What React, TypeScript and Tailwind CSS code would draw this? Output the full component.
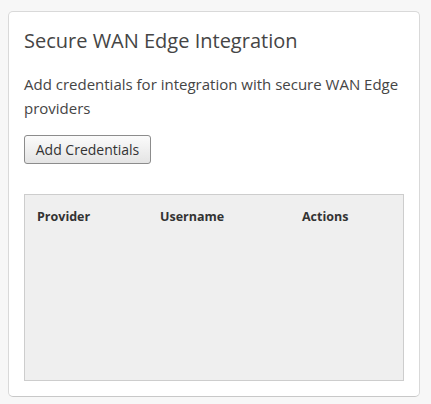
export default function App() {
  return (
    <div className="min-h-[404px] bg-[#f7f7f7] px-2 pt-[11px] pb-[7px]" style={{ fontFamily: '"Open Sans", sans-serif' }}>
      <div className="flex h-[386px] w-[412px] flex-col rounded-[5px] border border-[#d9d9d9] border-b-[#c8c8c8] bg-white px-[15px] pt-[15px] pb-[15px]">
        <h2 className="text-[20px] leading-[28px] text-[#454545]">Secure WAN Edge Integration</h2>
        <p className="mt-[17px] text-[15px] leading-[24px] text-[#454545]">
          Add credentials for integration with secure WAN Edge providers
        </p>
        <div className="mt-[15px]">
          <button className="h-[29px] w-[127px] rounded-[3px] border border-[#8c8c8c] bg-gradient-to-b from-[#fbfbfb] to-[#e4e4e4] text-[14px] text-[#333]">
            Add Credentials
          </button>
        </div>
        <div className="mt-[30px] flex-1 border border-[#cdcdcd] bg-[#efefef]">
          <div className="grid grid-cols-[123px_142px_1fr] pl-[12px] pt-[12px] text-[12.5px] font-bold leading-[20px] text-[#333]">
            <span>Provider</span>
            <span>Username</span>
            <span>Actions</span>
          </div>
        </div>
      </div>
    </div>
  )
}
